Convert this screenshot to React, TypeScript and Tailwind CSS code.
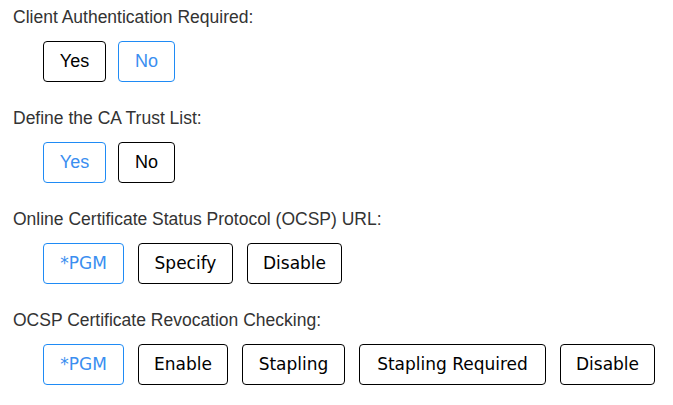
import React, { useState } from 'react';

type Group = {
  label: string;
  options: { text: string; w: number; verdana?: boolean }[];
  initial: number;
  wide?: boolean;
};

const groups: Group[] = [
  {
    label: 'Client Authentication Required:',
    options: [
      { text: 'Yes', w: 63 },
      { text: 'No', w: 57 },
    ],
    initial: 1,
  },
  {
    label: 'Define the CA Trust List:',
    options: [
      { text: 'Yes', w: 63 },
      { text: 'No', w: 57 },
    ],
    initial: 0,
  },
  {
    label: 'Online Certificate Status Protocol (OCSP) URL:',
    options: [
      { text: '*PGM', w: 81, verdana: true },
      { text: 'Specify', w: 95, verdana: true },
      { text: 'Disable', w: 95, verdana: true },
    ],
    initial: 0,
    wide: true,
  },
  {
    label: 'OCSP Certificate Revocation Checking:',
    options: [
      { text: '*PGM', w: 81, verdana: true },
      { text: 'Enable', w: 90, verdana: true },
      { text: 'Stapling', w: 103, verdana: true },
      { text: 'Stapling Required', w: 187, verdana: true },
      { text: 'Disable', w: 95, verdana: true },
    ],
    initial: 0,
    wide: true,
  },
];

function OptionGroup({ group }: { group: Group }) {
  const [selected, setSelected] = useState(group.initial);

  return (
    <div className="flex flex-col mb-[26px]">
      <div className="h-[20px] text-[17.5px] leading-[20px] text-[#333333] font-['Liberation_Sans',Arial,sans-serif]">
        {group.label}
      </div>
      <div className={`flex mt-[14px] pl-[30px] ${group.wide ? 'gap-[14px]' : 'gap-[12px]'}`}>
        {group.options.map((opt, i) => (
          <button
            key={opt.text}
            onClick={() => setSelected(i)}
            style={{ width: opt.w }}
            className={`h-[41px] rounded-[4px] border bg-white flex items-center justify-center
              ${opt.verdana
                ? "text-[17px] font-['DejaVu_Sans',Verdana,sans-serif]"
                : "text-[18px] font-['Liberation_Sans',Arial,sans-serif]"}
              ${selected === i
                ? 'border-[#1f8bf5] text-[#3a8ef0]'
                : 'border-black text-black'}`}
          >
            {opt.text}
          </button>
        ))}
      </div>
    </div>
  );
}

export default function App() {
  return (
    <div className="w-[673px] h-[405px] bg-white pt-[7px] pl-[13px] overflow-hidden">
      {groups.map((g) => (
        <OptionGroup key={g.label} group={g} />
      ))}
    </div>
  );
}
